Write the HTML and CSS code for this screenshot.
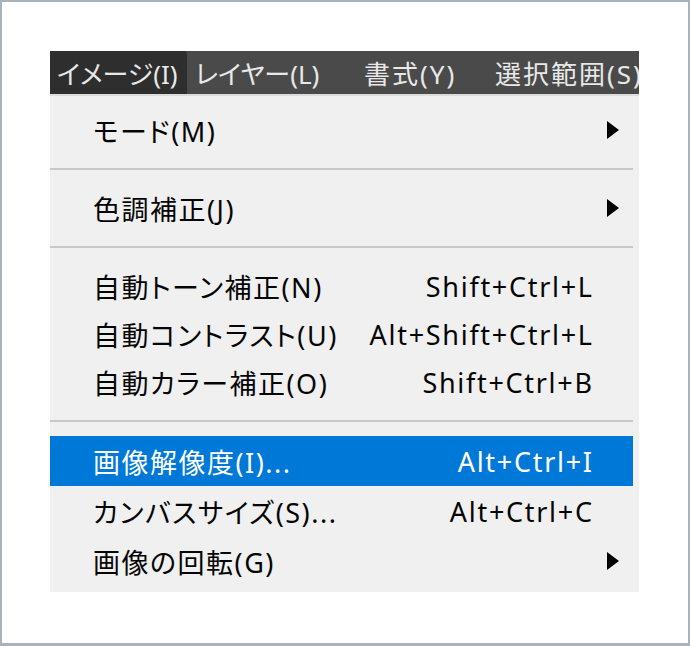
FILE: index.html
```html
<!DOCTYPE HTML>
<html>
	<head>
		<meta charset='utf-8' />
		<title>イメージメニュー</title>
		<link rel="stylesheet" href="styles.css">
	</head>
	<body>
		<div class='frame'>
			<div class='shot'>
				<ul class='menubar'>
					<li class='on'>イメージ(I)</li>
					<li>レイヤー(L)</li>
					<li>書式(Y)</li>
					<li>選択範囲(S)</li>
				</ul>
				<ul class='menu'>
					<li class='item'><span class='label'>モード(M)</span><span class='key'></span><span class='sub'><i></i></span></li>
					<li class='sep'></li>
					<li class='item'><span class='label'>色調補正(J)</span><span class='key'></span><span class='sub'><i></i></span></li>
					<li class='sep'></li>
					<li class='item'><span class='label'>自動トーン補正(N)</span><span class='key'>Shift+Ctrl+L</span><span class='sub'></span></li>
					<li class='item'><span class='label'>自動コントラスト(U)</span><span class='key'>Alt+Shift+Ctrl+L</span><span class='sub'></span></li>
					<li class='item'><span class='label'>自動カラー補正(O)</span><span class='key'>Shift+Ctrl+B</span><span class='sub'></span></li>
					<li class='sep'></li>
					<li class='item tall hover'><span class='label'>画像解像度(I)...</span><span class='key'>Alt+Ctrl+I</span><span class='sub'></span></li>
					<li class='item tall'><span class='label'>カンバスサイズ(S)...</span><span class='key'>Alt+Ctrl+C</span><span class='sub'></span></li>
					<li class='item tall'><span class='label'>画像の回転(G)</span><span class='key'></span><span class='sub'><i></i></span></li>
				</ul>
			</div>
		</div>
	</body>
</html>
```

FILE: styles.css
```css
body{margin:0;}
ul,li{margin:0;padding:0;list-style: none;}

.frame{
	box-sizing:border-box;
	width:690px;
	height:646px;
	border:2px solid #aab2ba;
	border-bottom-width:3px;
	background:#fff;
	padding:49px 0 0 48px;
	font-family:"Noto Sans","Noto Sans CJK JP",sans-serif;
	font-feature-settings:"palt";
}
.shot{
	width:589px;
	overflow:hidden;
}
.menubar{
	display:flex;
	height:43px;
	background:#4a4a4a;
	color:#e8e8e8;
	font-size:26px;
	white-space:nowrap;
	border-bottom:2px solid #dcdcdc;
}
.menubar li{
	display:flex;
	align-items:center;
	flex:none;
	box-sizing:border-box;
	padding-left:8px;
}
.menubar li:nth-child(1){width:137px;padding-left:7px;}
.menubar li:nth-child(2){width:169px;}
.menubar li:nth-child(3){width:131px;letter-spacing:2px;}
.menubar li:nth-child(4){letter-spacing:2px;}
.menubar li.on{
	background:#2e2e2e;
	border-top-right-radius:3px;
}
.menu{
	background:#f0f0f0;
	padding:10px 6px 6px 0;
	color:#050505;
	font-size:27px;
}
.menu .item{
	display:flex;
	align-items:center;
	height:48px;
	padding-left:43px;
}
.menu .item.tall{
	height:50px;
}
.menu .item.hover{
	background:#0078d7;
	color:#fff;
}
.menu .label{
	flex:1;
	letter-spacing:1.5px;
}
.menu .key{
	letter-spacing:1.7px;
	margin-right:-1.7px;
}
.menu .sub{
	display:flex;
	align-items:center;
	width:41px;
	height:100%;
	padding-left:15px;
	box-sizing:border-box;
}
.menu .sub i{
	width:0;
	height:0;
	border-left:12px solid #000;
	border-top:9px solid transparent;
	border-bottom:9px solid transparent;
}
.menu .sep{
	height:30px;
	box-sizing:border-box;
	padding-top:14px;
}
.menu .sep:before{
	content:'';
	display:block;
	height:2px;
	background:#c8c8c8;
}
```
